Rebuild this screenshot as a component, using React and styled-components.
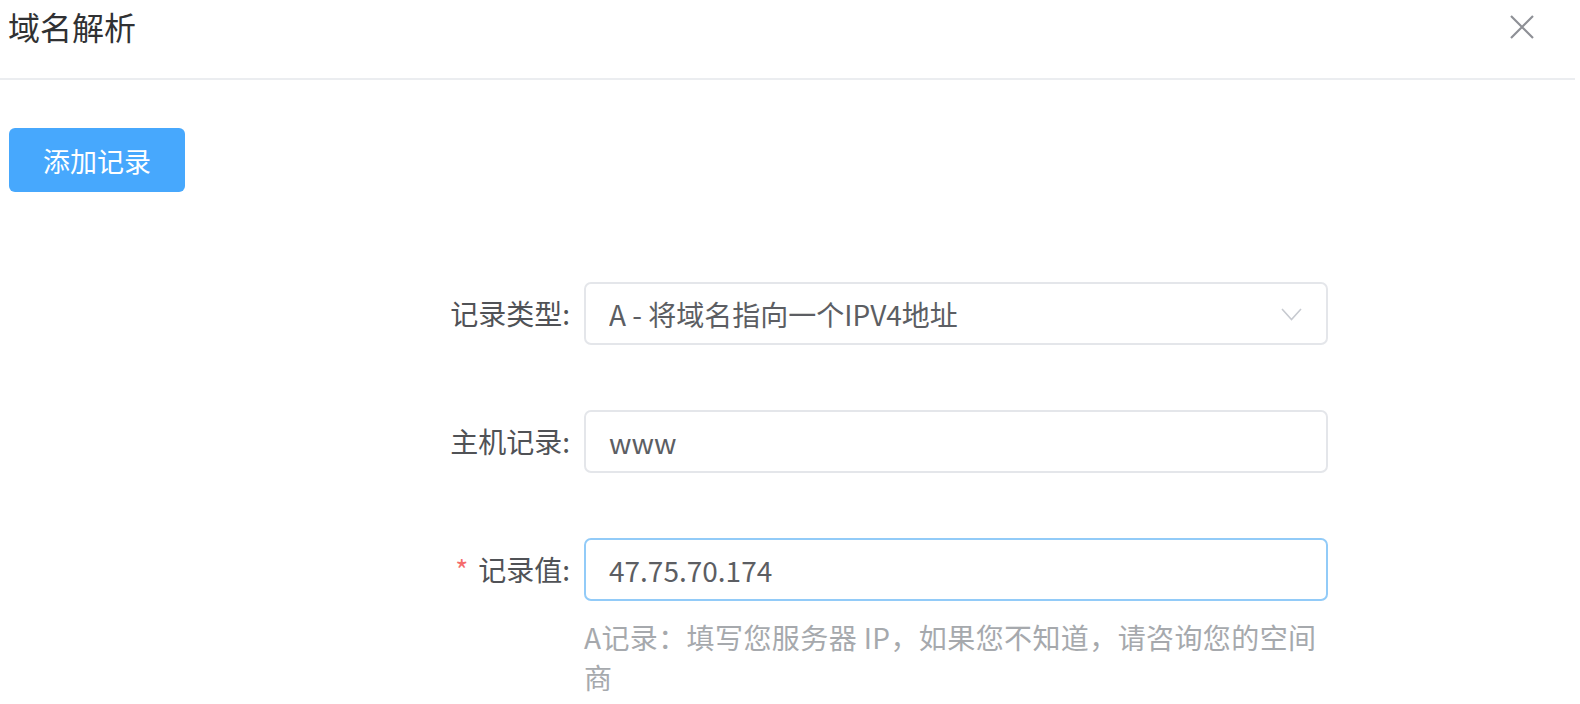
import React from 'react';
import styled, { createGlobalStyle } from 'styled-components';

const GlobalStyle = createGlobalStyle`
  html, body {
    margin: 0;
    padding: 0;
    background: #fff;
  }
  body {
    font-family: "Noto Sans CJK SC", "Noto Sans", sans-serif;
  }
  * {
    box-sizing: border-box;
  }
`;

const Dialog = styled.div`
  width: 1575px;
  height: 704px;
  overflow: hidden;
  background: #fff;
`;

const Header = styled.header`
  height: 80px;
  padding: 6px 40px 0 8px;
  display: flex;
  justify-content: space-between;
  align-items: flex-start;
  border-bottom: 2px solid #ebedf0;
`;

const Title = styled.h2`
  margin: 0;
  font-size: 32px;
  font-weight: 400;
  line-height: 40px;
  color: #303133;
`;

const CloseButton = styled.button`
  margin-top: 8px;
  padding: 0;
  width: 26px;
  height: 26px;
  border: none;
  background: transparent;
  display: flex;
  align-items: center;
  justify-content: center;
  cursor: pointer;
`;

const Body = styled.main`
  padding: 48px 8px 0 9px;
`;

const PrimaryButton = styled.button`
  width: 176px;
  height: 64px;
  border: none;
  border-radius: 6px;
  background: #47a8fd;
  color: #fff;
  font-family: inherit;
  font-size: 27px;
  cursor: pointer;
`;

const Form = styled.form`
  margin: 90px 0 0 424px;
  display: flex;
  flex-direction: column;
  gap: 65px;
`;

const FormItem = styled.div`
  display: flex;
  align-items: flex-start;
`;

const Label = styled.label`
  width: 151px;
  padding-right: 14px;
  text-align: right;
  line-height: 63px;
  font-size: 28px;
  color: #505256;
  white-space: nowrap;
`;

const Star = styled.span`
  color: #f56c6c;
  margin-right: 10px;
  font-size: 28px;
`;

const Control = styled.div`
  width: 744px;
`;

const Field = styled.div`
  position: relative;
  height: 63px;
  border: 2px solid ${props => (props.focused ? '#92cbf8' : '#e4e6ea')};
  border-radius: 7px;
  display: flex;
  align-items: center;
  background: #fff;
`;

const Input = styled.input`
  width: 100%;
  height: 100%;
  border: none;
  outline: none;
  background: transparent;
  padding: 0 23px;
  font-family: inherit;
  font-size: 28px;
  color: #5c5e63;
  cursor: ${props => (props.readOnly ? 'pointer' : 'text')};
`;

const Chevron = styled.svg`
  position: absolute;
  right: 24px;
  top: 50%;
  margin-top: -6px;
`;

const Hint = styled.div`
  margin-top: 16px;
  font-size: 28px;
  letter-spacing: 0.4px;
  line-height: 40px;
  color: #a6a9ad;
`;

const App = () => (
  <Dialog>
    <GlobalStyle />
    <Header>
      <Title>域名解析</Title>
      <CloseButton aria-label="关闭">
        <svg width="26" height="26" viewBox="0 0 26 26">
          <path d="M2 2 L24 24 M24 2 L2 24" stroke="#8e9096" strokeWidth="2.2" fill="none" />
        </svg>
      </CloseButton>
    </Header>
    <Body>
      <PrimaryButton type="button">添加记录</PrimaryButton>
      <Form>
        <FormItem>
          <Label>记录类型:</Label>
          <Control>
            <Field>
              <Input readOnly defaultValue="A - 将域名指向一个IPV4地址" />
              <Chevron width="21" height="13" viewBox="0 0 21 13">
                <path d="M1 1 L10.5 11.5 L20 1" stroke="#c7cad0" strokeWidth="1.6" fill="none" />
              </Chevron>
            </Field>
          </Control>
        </FormItem>
        <FormItem>
          <Label>主机记录:</Label>
          <Control>
            <Field>
              <Input defaultValue="www" />
            </Field>
          </Control>
        </FormItem>
        <FormItem>
          <Label><Star>*</Star>记录值:</Label>
          <Control>
            <Field focused>
              <Input defaultValue="47.75.70.174" />
            </Field>
            <Hint>A记录：填写您服务器 IP，如果您不知道，请咨询您的空间商</Hint>
          </Control>
        </FormItem>
      </Form>
    </Body>
  </Dialog>
);

export default App;
